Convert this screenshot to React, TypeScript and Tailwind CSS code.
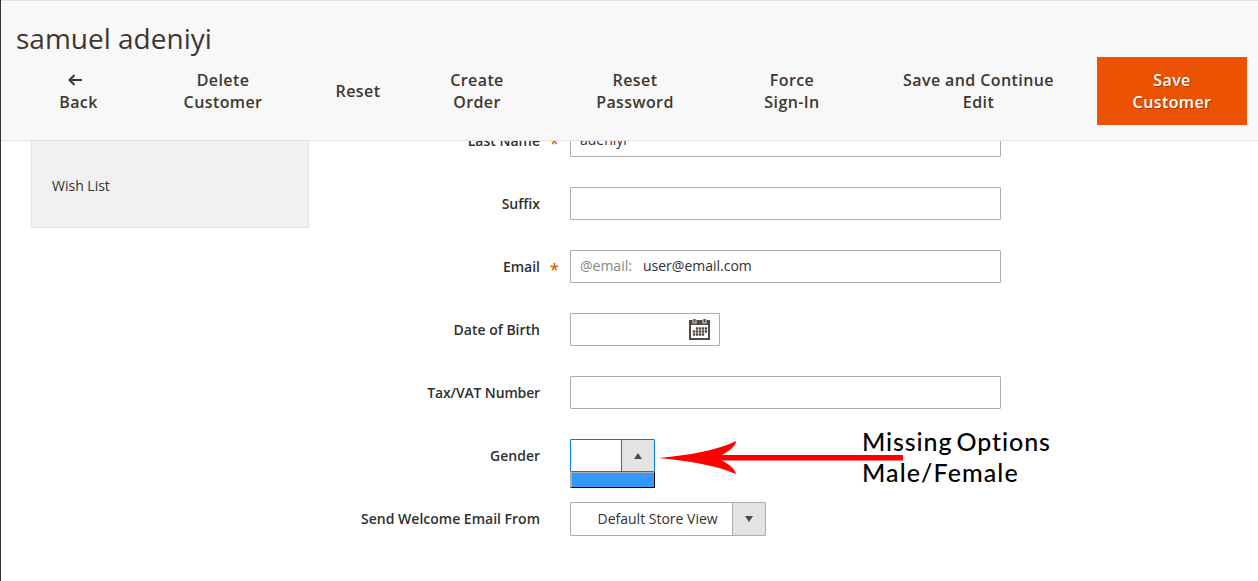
import React from 'react';

const CalendarIcon: React.FC = () => (
  <svg width="21" height="21" viewBox="0 0 21 21" className="shrink-0" aria-hidden="true">
    <path d="M0 1h21v20H0z" fill="#514943" />
    <path d="M2 6h17v13H2z" fill="#fff" />
    <path d="M3.5 0h4v4.5h-4zM13.5 0h4v4.5h-4z" fill="#d9d6d3" />
    <path d="M4.5 0h2v3.5h-2zM14.5 0h2v3.5h-2z" fill="#514943" />
    <path
      d="M7 8.5h2v2H7zM10 8.5h2v2h-2zM13 8.5h2v2h-2zM16 8.5h2v2h-2zM4 11.5h2v2H4zM7 11.5h2v2H7zM10 11.5h2v2h-2zM13 11.5h2v2h-2zM16 11.5h2v2h-2zM4 14.5h2v2H4zM7 14.5h2v2H7zM10 14.5h2v2h-2zM13 14.5h2v2h-2z"
      fill="#514943"
      stroke="#514943"
      strokeWidth="0.4"
    />
  </svg>
);

type FieldProps = {
  label: React.ReactNode;
  required?: boolean;
  children: React.ReactNode;
};

const Field: React.FC<FieldProps> = ({ label, required, children }) => (
  <div className="flex h-[33px]">
    <label className="w-[231px] text-right font-semibold leading-[33px]">{label}</label>
    <span className="w-[30px] pl-[10px] text-[16px] font-semibold leading-[38px] text-[#eb5202]">
      {required && '*'}
    </span>
    {children}
  </div>
);

const actionClass =
  'shrink-0 text-center text-[16px] font-semibold leading-[22px] tracking-[0.4px]';
const inputClass = 'flex h-[33px] w-[431px] rounded-[1px] border border-[#adadad] bg-white px-[9px] leading-[29px]';

const Header: React.FC = () => (
  <header className="relative z-10 h-[141px] border-t border-b border-[#e3e3e3] bg-[#f8f8f8]">
    <h1 className="h-[56px] pl-[15px] pt-[18px] text-[28px] leading-[38px] text-[#41362f]">
      samuel adeniyi
    </h1>
    <div className="flex h-[68px] items-center pl-[18px] text-[#41362f]">
      <button className={`${actionClass} w-[119px]`}>
        <svg width="14" height="12" viewBox="0 0 14 12" className="mx-auto mt-[5px] mb-[5px] -translate-x-[4px]">
          <path d="M6.5 1 1.5 6l5 5M2 6h12" fill="none" stroke="#41362f" strokeWidth="2" />
        </svg>
        Back
      </button>
      <button className={`${actionClass} w-[170px]`}>Delete<br />Customer</button>
      <button className={`${actionClass} w-[100px]`}>Reset</button>
      <button className={`${actionClass} w-[138px]`}>Create<br />Order</button>
      <button className={`${actionClass} w-[178px]`}>Reset<br />Password</button>
      <button className={`${actionClass} w-[136px]`}>Force<br />Sign-In</button>
      <button className={`${actionClass} w-[237px]`}>Save and Continue<br />Edit</button>
      <button
        className={`${actionClass} h-[68px] w-[150px] bg-[#eb5202] text-white [text-shadow:1px_1px_0_rgba(0,0,0,0.3)]`}
      >
        Save<br />Customer
      </button>
    </div>
  </header>
);

const App: React.FC = () => {
  return (
    <div className="relative h-[581px] w-full overflow-hidden border-l border-[#373330] bg-white font-['Open_Sans',sans-serif] text-[14px] text-[#303030]">
      <Header />

      <main className="flex pl-[30px]">
        <nav className="h-[87px] w-[278px] border border-t-0 border-[#e3e3e3] bg-[#f1f1f1] pl-[20px] pt-[35px] leading-[20px]">
          Wish List
        </nav>

        <form className="-mt-[17px] flex flex-col gap-[30px]">
          <Field label="Last Name" required>
            <div className={inputClass}>adeniyi</div>
          </Field>
          <Field label="Suffix">
            <div className={inputClass} />
          </Field>
          <Field label="Email" required>
            <div className={inputClass}>
              <span className="w-[63px] text-[#858585]">@email:</span>
              <span>user@email.com</span>
            </div>
          </Field>
          <Field label="Date of Birth">
            <div className="flex h-[33px] w-[150px] justify-end rounded-[1px] border border-[#adadad] pr-[9px] pt-[5px]">
              <CalendarIcon />
            </div>
          </Field>
          <Field label={<span className="tracking-[-0.15px]">Tax/VAT Number</span>}>
            <div className={inputClass} />
          </Field>
          <Field label="Gender">
            <div className="relative h-[33px] w-[85px]">
              <div className="flex h-[33px] rounded-[1px] border border-[#007bdb]">
                <div className="flex-1" />
                <div className="flex w-[33px] items-center justify-center border-l border-[#007bdb] bg-[#e3e3e3]">
                  <svg width="8" height="6" viewBox="0 0 8 6">
                    <path d="M0 6 4 0l4 6z" fill="#514943" />
                  </svg>
                </div>
              </div>
              {/* open option list with its only, empty entry */}
              <div className="absolute left-0 top-[33px] h-[16px] w-[85px] border border-l-2 border-t-[#adadad] border-r-black border-b-black border-l-[#adadad] bg-[#3399ff]" />
            </div>
          </Field>
          <Field label="Send Welcome Email From">
            <div className="flex h-[34px] w-[196px] rounded-[1px] border border-[#adadad] leading-[32px]">
              <span className="flex-1 pl-[26.5px]">Default Store View</span>
              <span className="flex w-[33px] items-center justify-center border-l border-[#adadad] bg-[#e3e3e3]">
                <svg width="8" height="6" viewBox="0 0 8 6">
                  <path d="M0 0h8L4 6z" fill="#514943" />
                </svg>
              </span>
            </div>
          </Field>
        </form>
      </main>

      {/* annotation over the form */}
      <div className="absolute left-[861px] top-[426px] whitespace-nowrap font-['Lato',sans-serif] text-[25px] font-medium leading-[31px] tracking-[0.9px] [word-spacing:-3px] text-black">
        Missing Options<br />
        <span className="tracking-[1.1px]">Male/Female</span>
      </div>
      <svg width="244" height="36" viewBox="0 0 244 36" className="absolute left-[658px] top-[440px]">
        <path
          d="M0 18C32 15 59 10 77 1c0 5-7 10-14 14h181v5.5H63c7 3.500 13 8.500 14 13.500C59 26 32 21 0 18z"
          fill="#f00"
        />
      </svg>
    </div>
  );
};

export default App;
